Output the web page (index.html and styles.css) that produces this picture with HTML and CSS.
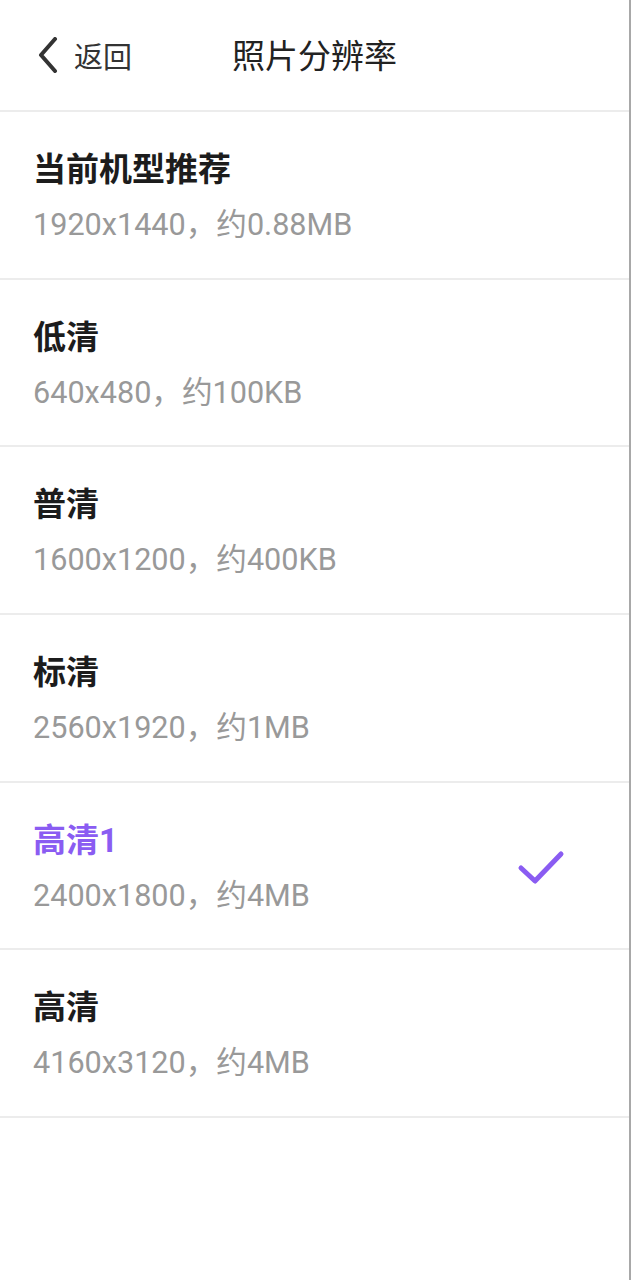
FILE: index.html
```html
<!DOCTYPE html>
<html lang="zh-CN">
<head>
<meta charset="utf-8">
<title>照片分辨率</title>
<link rel="stylesheet" href="styles.css">
</head>
<body>
<div class="page">
  <header class="header">
    <div class="back">
      <svg class="chev" width="24" height="36" viewBox="0 0 24 36"><path d="M19 2 L5 18 L19 34" fill="none" stroke="#333" stroke-width="4" stroke-linecap="round" stroke-linejoin="round"/></svg>
      <span class="back-text">返回</span>
    </div>
    <div class="title">照片分辨率</div>
  </header>
  <ul class="list">
    <li class="item"><div class="text"><div class="name">当前机型推荐</div><div class="desc">1920x1440，约0.88MB</div></div></li>
    <li class="item"><div class="text"><div class="name">低清</div><div class="desc">640x480，约100KB</div></div></li>
    <li class="item"><div class="text"><div class="name">普清</div><div class="desc">1600x1200，约400KB</div></div></li>
    <li class="item"><div class="text"><div class="name">标清</div><div class="desc">2560x1920，约1MB</div></div></li>
    <li class="item selected"><div class="text"><div class="name">高清1</div><div class="desc">2400x1800，约4MB</div></div>
      <svg class="check" width="52" height="40" viewBox="0 0 52 40"><path d="M5 19 L19 32 L45 5" fill="none" stroke="#8a5cf2" stroke-width="5" stroke-linecap="round" stroke-linejoin="round"/></svg>
    </li>
    <li class="item"><div class="text"><div class="name">高清</div><div class="desc">4160x3120，约4MB</div></div></li>
  </ul>
</div>
</body>
</html>
```

FILE: styles.css
```css
html, body {
  margin: 0;
  padding: 0;
  background: #fff;
}
body {
  font-family: Roboto, "Noto Sans CJK SC", sans-serif;
}
.page {
  min-height: 1280px;
  box-sizing: border-box;
  border-right: 2px solid #a8a8a8;
}
.header {
  position: relative;
  height: 112px;
  box-sizing: border-box;
  border-bottom: 2px solid #ececec;
  display: flex;
  align-items: center;
  justify-content: center;
}
.back {
  position: absolute;
  left: 36px;
  top: 37px;
  display: flex;
  align-items: center;
  gap: 14px;
}
.chev {
  display: block;
}
.back-text {
  font-family: "Noto Sans CJK SC", sans-serif;
  font-size: 29px;
  color: #333;
  line-height: 36px;
}
.title {
  font-family: "Noto Sans CJK SC", sans-serif;
  font-size: 33px;
  color: #222;
  line-height: 40px;
  margin-bottom: 2px;
}
.list {
  list-style: none;
  margin: 0;
  padding: 0;
}
.item {
  height: 167.7px;
  box-sizing: border-box;
  border-bottom: 2px solid #ececec;
  padding: 38px 61px 0 33px;
  display: flex;
  justify-content: space-between;
  align-items: flex-start;
}
.name {
  font-family: Roboto, "Noto Sans CJK SC", sans-serif;
  font-weight: 700;
  font-size: 33px;
  line-height: 40px;
  color: #1c1c1c;
}
.desc {
  margin-top: 15px;
  font-size: 30.6px;
  line-height: 40px;
  color: #999;
}
.selected .name {
  color: #8a5cf2;
}
.check {
  display: block;
  margin-top: 28px;
}
```
